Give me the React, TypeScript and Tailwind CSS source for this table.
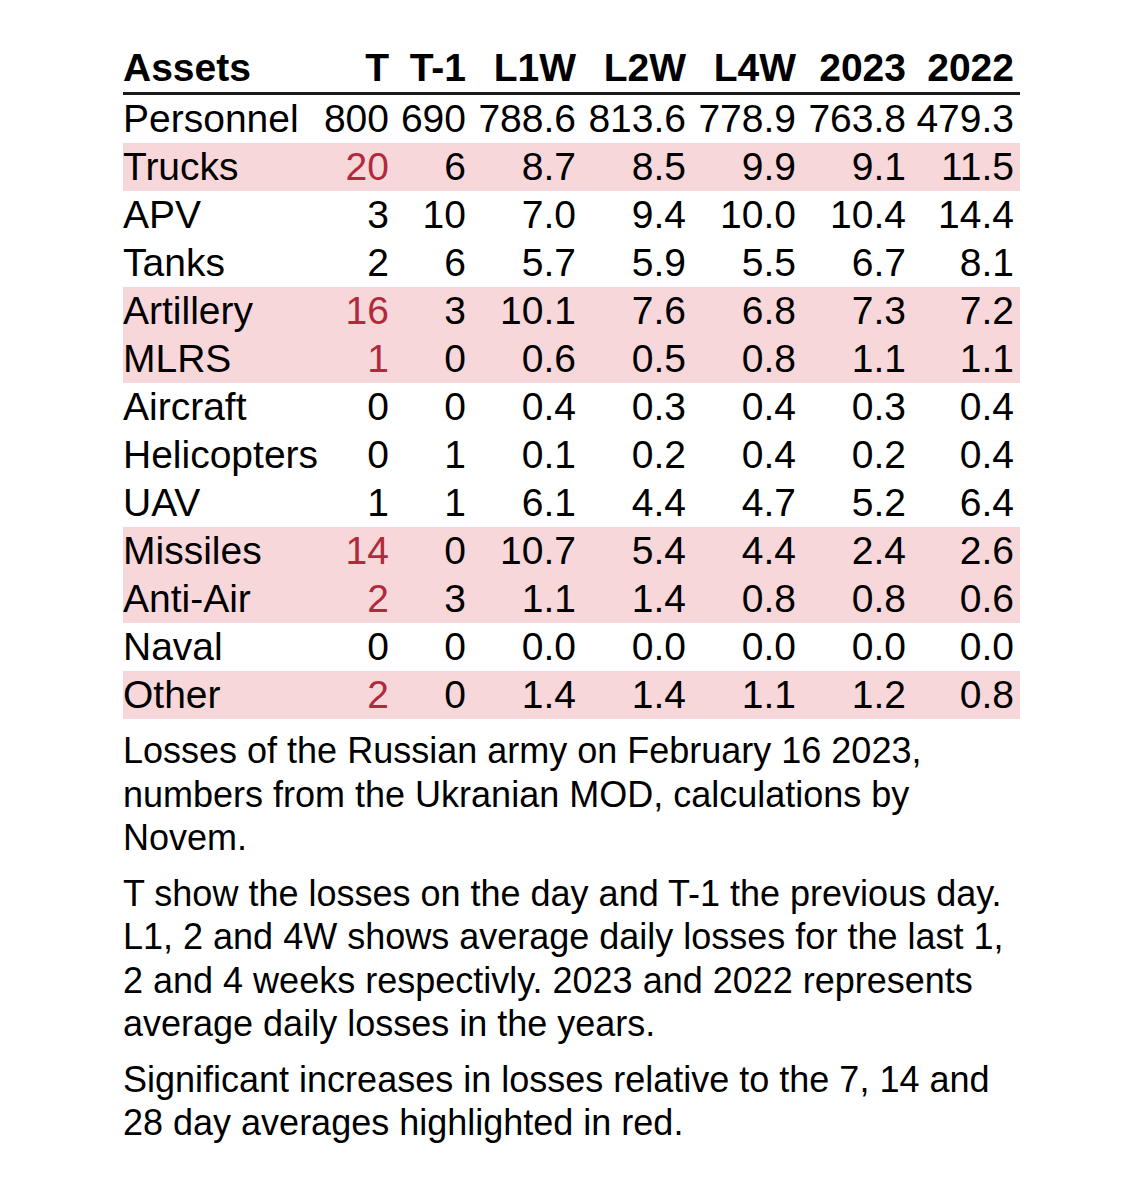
import React from "react";

type Row = {
  name: string;
  values: string[];
  highlight?: boolean;
};

const headers = ["T", "T-1", "L1W", "L2W", "L4W", "2023", "2022"];

const rows: Row[] = [
  { name: "Personnel", values: ["800", "690", "788.6", "813.6", "778.9", "763.8", "479.3"] },
  { name: "Trucks", values: ["20", "6", "8.7", "8.5", "9.9", "9.1", "11.5"], highlight: true },
  { name: "APV", values: ["3", "10", "7.0", "9.4", "10.0", "10.4", "14.4"] },
  { name: "Tanks", values: ["2", "6", "5.7", "5.9", "5.5", "6.7", "8.1"] },
  { name: "Artillery", values: ["16", "3", "10.1", "7.6", "6.8", "7.3", "7.2"], highlight: true },
  { name: "MLRS", values: ["1", "0", "0.6", "0.5", "0.8", "1.1", "1.1"], highlight: true },
  { name: "Aircraft", values: ["0", "0", "0.4", "0.3", "0.4", "0.3", "0.4"] },
  { name: "Helicopters", values: ["0", "1", "0.1", "0.2", "0.4", "0.2", "0.4"] },
  { name: "UAV", values: ["1", "1", "6.1", "4.4", "4.7", "5.2", "6.4"] },
  { name: "Missiles", values: ["14", "0", "10.7", "5.4", "4.4", "2.4", "2.6"], highlight: true },
  { name: "Anti-Air", values: ["2", "3", "1.1", "1.4", "0.8", "0.8", "0.6"], highlight: true },
  { name: "Naval", values: ["0", "0", "0.0", "0.0", "0.0", "0.0", "0.0"] },
  { name: "Other", values: ["2", "0", "1.4", "1.4", "1.1", "1.2", "0.8"], highlight: true },
];

const cols = "grid grid-cols-[196px_76px_77px_110px_110px_110px_110px_108px]";

export default function App() {
  return (
    <div className="min-h-screen bg-white pt-[44px] pl-[123px] text-black font-['Liberation_Sans',Arial,sans-serif]">
      <div className="w-[897px]">
        {/* Table */}
        <div className="text-[39px]">
          <div className={`${cols} h-[51px] leading-[48px] font-bold border-b-[3px] border-[#1a1a1a]`}>
            <div>Assets</div>
            {headers.map((h) => (
              <div key={h} className="text-right pr-[6px]">
                {h}
              </div>
            ))}
          </div>
          {rows.map((row) => (
            <div
              key={row.name}
              className={`${cols} h-[48px] leading-[48px] ${row.highlight ? "bg-[#f8d7da]" : ""}`}
            >
              <div className="whitespace-nowrap">{row.name}</div>
              {row.values.map((v, i) => (
                <div
                  key={i}
                  className={`text-right pr-[6px] ${row.highlight && i === 0 ? "text-[#b12a3b]" : ""}`}
                >
                  {v}
                </div>
              ))}
            </div>
          ))}
        </div>

        {/* Caption */}
        <div className="mt-[10px] text-[36px] leading-[43.5px]">
          <p>
            Losses of the Russian army on February 16 2023, numbers from the Ukranian MOD,
            calculations by Novem.
          </p>
          <p className="mt-[12px]">
            T show the losses on the day and T-1 the previous day. L1, 2 and 4W shows average
            daily losses for the last 1, 2 and 4 weeks respectivly. 2023 and 2022 represents
            average daily losses in the years.
          </p>
          <p className="mt-[12px]">
            Significant increases in losses relative to the 7, 14 and 28 day averages highlighted
            in red.
          </p>
        </div>
      </div>
    </div>
  );
}
